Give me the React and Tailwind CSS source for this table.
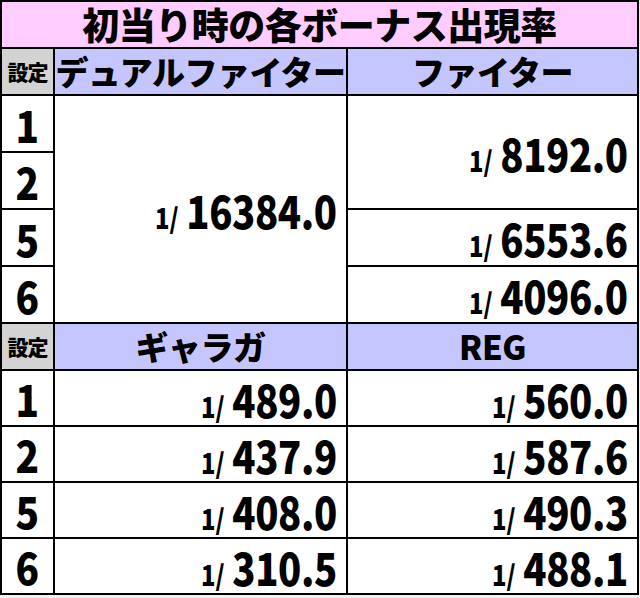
import React from "react";

const font = { fontFamily: '"Noto Sans CJK JP", "Noto Sans", sans-serif' };

const Rate = ({ value }) => (
  <span className="flex items-baseline leading-none scale-x-[0.85] origin-right">
    <span className="text-[28px] font-black mr-[9px]">1/</span>
    <span className="text-[45px] font-black tracking-[-0.5px]">{value}</span>
  </span>
);

const Setting = ({ n }) => (
  <div className="bg-white flex items-center justify-center text-[44px] font-black leading-none">
    <span className="scale-x-[0.88]">{n}</span>
  </div>
);

const SettingHead = () => (
  <div className="bg-[#d3d3d3] flex items-center justify-center text-[21px] font-black leading-none tracking-[-1px]">
    設定
  </div>
);

const Head = ({ children }) => (
  <div className="bg-[#c6c6ff] flex items-center justify-center text-[33px] font-black leading-none tracking-[-0.5px]">
    {children}
  </div>
);

const ValueCell = ({ value, className = "" }) => (
  <div className={`bg-white flex items-center justify-end pr-[9px] ${className}`}>
    <Rate value={value} />
  </div>
);

const fighterRows = [
  { value: "8192.0" },
  { value: "6553.6" },
  { value: "4096.0" },
];

const galagaRows = [
  { n: "1", galaga: "489.0", reg: "560.0" },
  { n: "2", galaga: "437.9", reg: "587.6" },
  { n: "5", galaga: "408.0", reg: "490.3" },
  { n: "6", galaga: "310.5", reg: "488.1" },
];

export default function App() {
  return (
    <div className="w-[640px] h-[598px] bg-[#f2f2f2] text-black" style={font}>
      <div className="w-[639px] grid grid-cols-[51px_291px_289px] grid-rows-[45px_45px_55px_55px_55px_55px_45px_54px_54px_54px_54px] gap-[2px] p-[2px] bg-black">
        {/* Title */}
        <div className="col-span-3 bg-[#ffccff] flex items-center justify-center text-[37px] font-black leading-none tracking-[-0.5px]">
          初当り時の各ボーナス出現率
        </div>

        {/* Dual fighter / fighter */}
        <SettingHead />
        <Head>デュアルファイター</Head>
        <Head>ファイター</Head>

        <Setting n="1" />
        <ValueCell value="16384.0" className="row-span-4" />
        <ValueCell value={fighterRows[0].value} className="row-span-2" />
        <Setting n="2" />
        <Setting n="5" />
        <ValueCell value={fighterRows[1].value} />
        <Setting n="6" />
        <ValueCell value={fighterRows[2].value} />

        {/* Galaga / REG */}
        <SettingHead />
        <Head>ギャラガ</Head>
        <Head>REG</Head>

        {galagaRows.map((row) => (
          <React.Fragment key={row.n}>
            <Setting n={row.n} />
            <ValueCell value={row.galaga} />
            <ValueCell value={row.reg} />
          </React.Fragment>
        ))}
      </div>
    </div>
  );
}
